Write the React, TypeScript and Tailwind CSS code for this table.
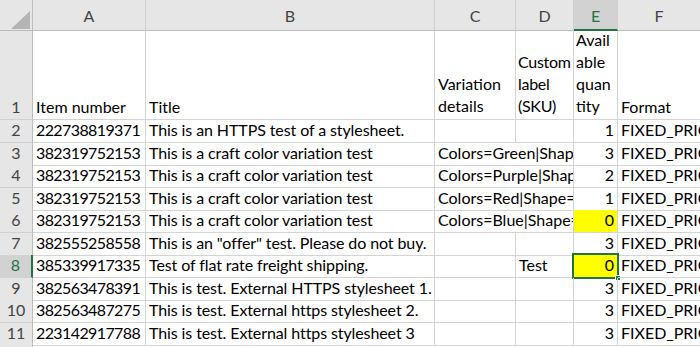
import React from "react";

type Row = {
  n: number;
  a: string;
  b: string;
  c: string;
  d: string;
  e: string;
  f: string;
  h: number;
  yellow?: boolean;
  sel?: boolean;
};

const rows: Row[] = [
  { n: 2, a: "222738819371", b: "This is an HTTPS test of a stylesheet.", c: "", d: "", e: "1", f: "FIXED_PRICE", h: 23 },
  { n: 3, a: "382319752153", b: "This is a craft color variation test", c: "Colors=Green|Shape=Square", d: "", e: "3", f: "FIXED_PRICE", h: 22 },
  { n: 4, a: "382319752153", b: "This is a craft color variation test", c: "Colors=Purple|Shape=Square", d: "", e: "2", f: "FIXED_PRICE", h: 23 },
  { n: 5, a: "382319752153", b: "This is a craft color variation test", c: "Colors=Red|Shape=Square", d: "", e: "1", f: "FIXED_PRICE", h: 22 },
  { n: 6, a: "382319752153", b: "This is a craft color variation test", c: "Colors=Blue|Shape=Square", d: "", e: "0", f: "FIXED_PRICE", h: 23, yellow: true },
  { n: 7, a: "382555258558", b: 'This is an "offer" test. Please do not buy.', c: "", d: "", e: "3", f: "FIXED_PRICE", h: 22 },
  { n: 8, a: "385339917335", b: "Test of flat rate freight shipping.", c: "", d: "Test", e: "0", f: "FIXED_PRICE", h: 23, yellow: true, sel: true },
  { n: 9, a: "382563478391", b: "This is test. External HTTPS stylesheet 1.", c: "", d: "", e: "3", f: "FIXED_PRICE", h: 22 },
  { n: 10, a: "382563487275", b: "This is test. External https stylesheet 2.", c: "", d: "", e: "3", f: "FIXED_PRICE", h: 23 },
  { n: 11, a: "223142917788", b: "This is test. External https stylesheet 3", c: "", d: "", e: "3", f: "FIXED_PRICE", h: 22 },
];

const cols = "grid-cols-[33px_113px_289px_81px_58px_44px_1fr]";

function Cell({
  children,
  right,
  className = "",
}: {
  children?: React.ReactNode;
  right?: boolean;
  className?: string;
}) {
  return (
    <div
      className={`relative flex min-w-0 items-end whitespace-nowrap border-r border-b border-[#d4d4d4] px-[3px] pb-[2px] leading-[20px] ${
        right ? "justify-end" : ""
      } ${className}`}
    >
      {children}
    </div>
  );
}

export default function App() {
  return (
    <div
      className="h-[347px] w-[700px] overflow-hidden bg-white text-[16px] text-black"
      style={{ fontFamily: "Lato, 'Open Sans', sans-serif" }}
    >
      {/* column headers */}
      <div className={`grid ${cols} h-[31px] bg-[#e6e6e6] text-[#444]`}>
        <div className="relative border-r border-b border-[#bdbdbd]">
          <svg className="absolute right-[2px] bottom-[1px]" width="19" height="18" viewBox="0 0 19 18">
            <polygon points="19,0 19,18 0,18" fill="#b4b4b4" />
          </svg>
        </div>
        {["A", "B", "C", "D"].map((l) => (
          <div
            key={l}
            className="flex items-center justify-center border-r border-b border-r-[#d0d0d0] border-b-[#bdbdbd] pt-[1px]"
          >
            {l}
          </div>
        ))}
        <div className="flex items-center justify-center border-r border-r-[#d0d0d0] border-b-2 border-b-[#217346] bg-[#d2d2d2] pt-[2px] text-[#217346]">
          E
        </div>
        <div className="flex items-center justify-center border-b border-[#bdbdbd] pt-[1px]">F</div>
      </div>

      {/* row 1 */}
      <div className={`grid ${cols} h-[89px]`}>
        <div className="flex items-end justify-center border-r border-b border-r-[#bdbdbd] border-b-[#d0d0d0] bg-[#e6e6e6] pb-[2px] leading-[20px] text-[#444]">
          1
        </div>
        <Cell className="overflow-hidden">Item number</Cell>
        <Cell className="overflow-hidden">Title</Cell>
        <Cell className="overflow-hidden">
          <div className="leading-[22px]">
            Variation
            <br />
            details
          </div>
        </Cell>
        <Cell className="overflow-hidden pl-[2px] tracking-[-0.3px]">
          <div className="leading-[22px]">
            Custom
            <br />
            label
            <br />
            (SKU)
          </div>
        </Cell>
        <Cell className="overflow-hidden pl-[2px]">
          <div className="leading-[22px]">
            Avail
            <br />
            able
            <br />
            quan
            <br />
            tity
          </div>
        </Cell>
        <Cell className="overflow-hidden border-r-0">Format</Cell>
      </div>

      {rows.map((r) => (
        <div key={r.n} className={`grid ${cols}`} style={{ height: r.h }}>
          <div
            className={`flex items-end justify-center border-b border-b-[#d0d0d0] pb-[2px] leading-[20px] ${
              r.sel
                ? "border-r-2 border-r-[#217346] bg-[#d2d2d2] text-[#217346]"
                : "border-r border-r-[#bdbdbd] bg-[#e6e6e6] text-[#444]"
            }`}
          >
            {r.n}
          </div>
          <Cell className="overflow-hidden tracking-[-0.6px]">{r.a}</Cell>
          <Cell className={`z-10 tracking-[-0.1px] ${r.c ? "overflow-hidden" : "overflow-visible"}`}>{r.b}</Cell>
          {r.c ? (
            <Cell className="col-span-2 overflow-hidden">{r.c}</Cell>
          ) : (
            <>
              <Cell className="overflow-hidden" />
              <Cell className="overflow-hidden">{r.d}</Cell>
            </>
          )}
          <div className="relative">
            <div
              className={`flex h-full items-end justify-end overflow-hidden whitespace-nowrap border-r border-b border-[#d4d4d4] px-[3px] pb-[2px] leading-[20px] ${
                r.yellow ? "bg-[#ffff00]" : ""
              }`}
            >
              {r.e}
            </div>
            {r.sel && (
              <>
                <div className="pointer-events-none absolute -top-[2px] -left-[2px] -right-[1px] -bottom-[1px] border-2 border-[#217346]" />
                <div className="absolute -right-[3px] -bottom-[3px] h-[6px] w-[6px] border border-white bg-[#217346]" />
              </>
            )}
          </div>
          <Cell className="overflow-hidden border-r-0">{r.f}</Cell>
        </div>
      ))}

      <div className={`grid ${cols} h-[10px]`}>
        <div className="border-r border-r-[#bdbdbd] bg-[#e6e6e6]" />
      </div>
    </div>
  );
}
